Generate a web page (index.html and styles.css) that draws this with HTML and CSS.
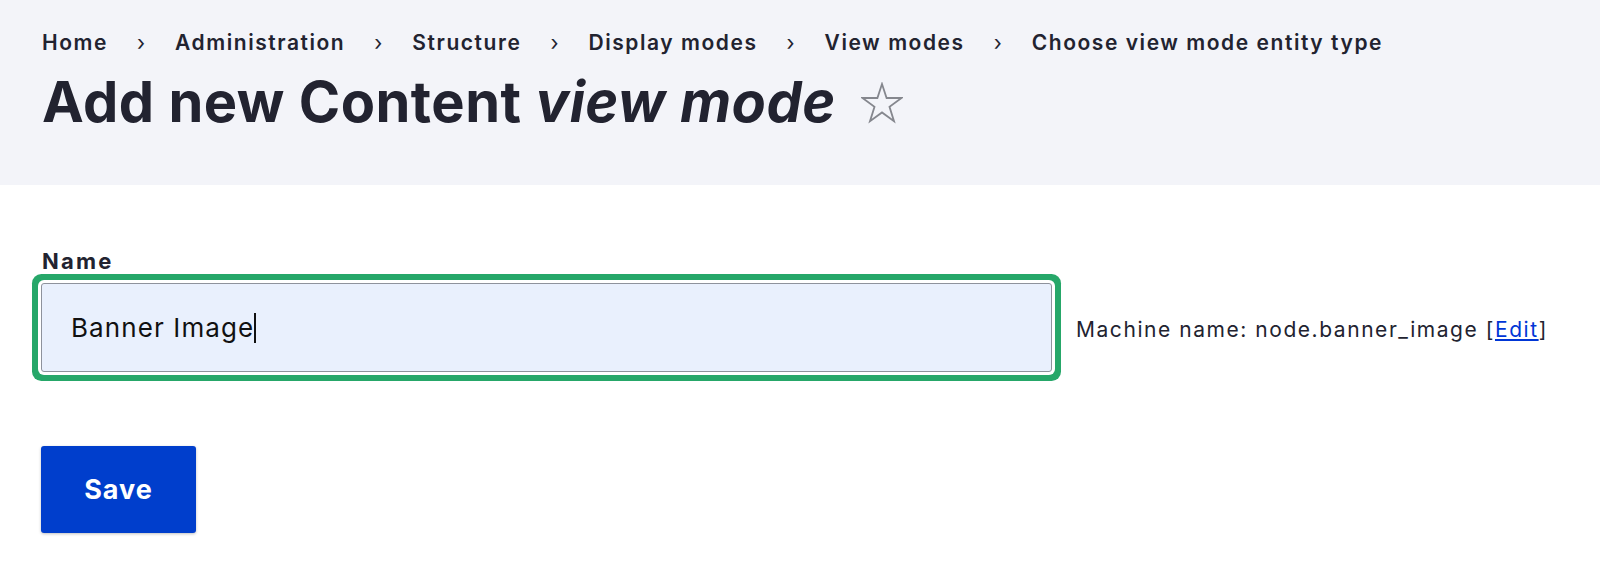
FILE: index.html
```html
<!DOCTYPE html>
<html lang="en">
<head>
<meta charset="utf-8">
<title>Add new Content view mode</title>
<link rel="stylesheet" href="styles.css">
</head>
<body>
<header class="page-header">
  <nav class="breadcrumb">
    <a href="#">Home</a><span class="sep">›</span>
    <a href="#">Administration</a><span class="sep">›</span>
    <a href="#">Structure</a><span class="sep">›</span>
    <a href="#">Display modes</a><span class="sep">›</span>
    <a href="#">View modes</a><span class="sep">›</span>
    <a href="#">Choose view mode entity type</a>
  </nav>
  <h1 class="title">Add new Content <em>view mode</em>
    <svg class="star" viewBox="0 0 42 42" width="42" height="42" aria-hidden="true"><polygon points="21,2 25.6,16 40.5,16 28.5,24.8 33,39.2 21,30.4 9,39.2 13.5,24.8 1.5,16 16.4,16" fill="none" stroke="#85878e" stroke-width="1.8" stroke-linejoin="miter"/></svg>
  </h1>
</header>
<main class="content">
  <label class="label">Name</label>
  <div class="field-row">
    <div class="input" role="textbox">Banner Image<span class="caret"></span></div>
    <span class="machine">Machine name: node.banner_image [<a href="#">Edit</a>]</span>
  </div>
  <button class="btn">Save</button>
</main>
</body>
</html>
```
FILE: styles.css
```css
html, body {
  margin: 0;
  padding: 0;
  background: #ffffff;
  font-family: Inter, "Noto Sans", sans-serif;
  color: #222330;
}
.page-header {
  background: #f3f4f9;
  padding: 28px 42px 49px;
}
.breadcrumb {
  display: flex;
  align-items: baseline;
  font-size: 21px;
  line-height: 30px;
  font-weight: 600;
  letter-spacing: 1.55px;
}
.breadcrumb a {
  color: #222330;
  text-decoration: none;
}
.breadcrumb .sep {
  font-weight: 400;
  color: #222330;
  letter-spacing: 0;
  margin: 0 30px 0 29px;
}
.title {
  margin: 11px 0 0;
  font-size: 56px;
  line-height: 67px;
  font-weight: 700;
  letter-spacing: 0.5px;
  display: flex;
  align-items: center;
}
.title em {
  font-style: italic;
  margin-left: 0.25em;
}
.star {
  margin-left: 25px;
  flex: none;
}
.content {
  padding: 62px 41px 40px;
}
.label {
  display: block;
  font-size: 22px;
  line-height: 28px;
  font-weight: 700;
  letter-spacing: 2.2px;
  margin-bottom: 8px;
  margin-left: 1px;
}
.field-row {
  display: flex;
  align-items: baseline;
  gap: 24px;
}
.input {
  box-sizing: border-box;
  width: 1011px;
  height: 89px;
  display: flex;
  align-items: center;
  padding: 0 29px;
  font-size: 26px;
  letter-spacing: 1.1px;
  background: #e9f0fd;
  border: 1px solid #8e929c;
  border-radius: 3px;
  box-shadow: 0 0 0 3px #ffffff, 0 0 0 9px #26a769;
  color: #111111;
}
.caret {
  display: inline-block;
  width: 1.5px;
  height: 30px;
  background: #111;
  margin-left: 0;
}
.machine {
  font-size: 21px;
  letter-spacing: 1.55px;
  color: #222330;
}
.machine a {
  color: #0036d6;
  text-decoration: underline;
}
.btn {
  display: block;
  margin-top: 74px;
  width: 155px;
  height: 87px;
  border: 0;
  border-radius: 3px;
  background: #003ecc;
  color: #ffffff;
  font-family: Inter, "Noto Sans", sans-serif;
  font-size: 27px;
  font-weight: 700;
  letter-spacing: 1px;
  box-shadow: 0 1px 3px rgba(0, 0, 0, 0.25);
}
```
